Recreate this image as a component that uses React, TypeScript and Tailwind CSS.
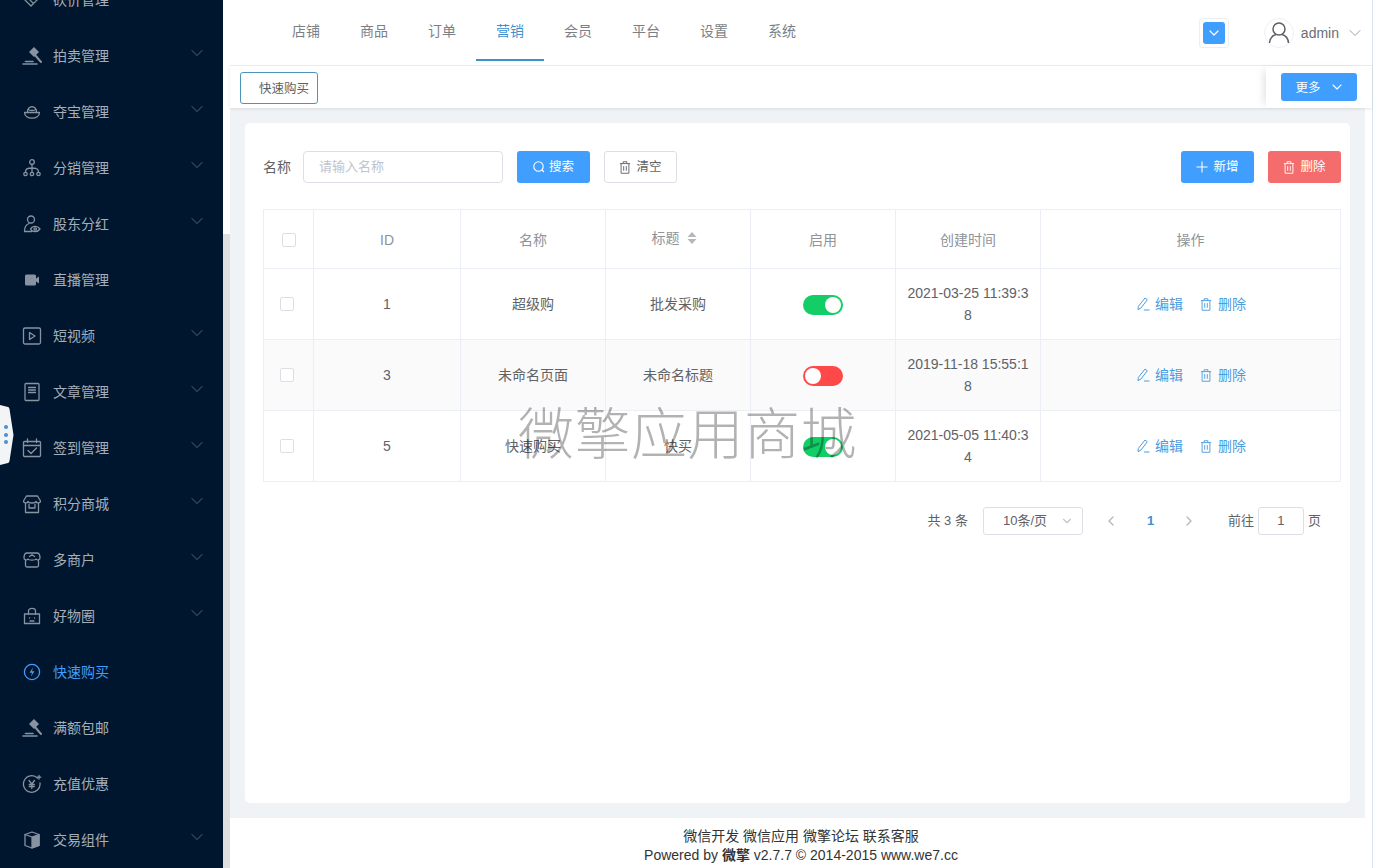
import { ChevronDown, ChevronLeft, ChevronRight } from "lucide-react";
import type { ReactNode } from "react";

type MenuItem = { label: string; icon: ReactNode; arrow?: boolean; active?: boolean };

function Ico({ children, size = 20 }: { children: ReactNode; size?: number }) {
  return (
    <svg width={size} height={size} viewBox="0 0 20 20" fill="none" stroke="currentColor" strokeWidth="1.3" strokeLinecap="round" strokeLinejoin="round">
      {children}
    </svg>
  );
}

const gavel = (
  <Ico>
    <path d="M12 1 L17 6 L12 11 L7 6 Z" fill="currentColor" stroke="none" />
    <path d="M13 9 L19 16" strokeWidth="2" />
    <path d="M1 18 H15" strokeWidth="1.6" />
    <path d="M3.5 15.5 H11" strokeWidth="1.6" />
  </Ico>
);

const menu: MenuItem[] = [
  { label: "砍价管理", arrow: true, icon: <Ico><path d="M3 10 L10 3 H16 V9 L9 16 Z" /><path d="M7 9 L11 13" /></Ico> },
  { label: "拍卖管理", arrow: true, icon: gavel },
  {
    label: "夺宝管理",
    arrow: true,
    icon: (
      <Ico>
        <path d="M2.5 10.5 C2.5 18 17.5 18 17.5 10.5 Z" />
        <path d="M5.5 10 C5.5 3 14.5 3 14.5 10" />
        <path d="M6 7.5 C8 8.8 12 8.8 14 7.5" />
      </Ico>
    ),
  },
  {
    label: "分销管理",
    arrow: true,
    icon: (
      <Ico>
        <circle cx="10" cy="4" r="2.3" />
        <path d="M10 6.5 V14 M10 10 C5 10 3.5 11 3.5 14 M10 10 C15 10 16.5 11 16.5 14" />
        <circle cx="3.5" cy="16" r="1.7" />
        <circle cx="10" cy="16" r="1.7" />
        <circle cx="16.5" cy="16" r="1.7" />
      </Ico>
    ),
  },
  {
    label: "股东分红",
    arrow: true,
    icon: (
      <Ico>
        <circle cx="9" cy="5.5" r="3.5" />
        <path d="M7 9.5 C4 10.5 2.5 14 2.5 17.5 H10" />
        <path d="M8.5 15 C10.5 11.5 15.5 11.5 18 15 C15.5 18.5 10.5 18.5 8.5 15 Z" />
        <circle cx="13.2" cy="15" r="1.2" />
      </Ico>
    ),
  },
  {
    label: "直播管理",
    icon: (
      <Ico>
        <rect x="3" y="4.5" width="11" height="11" rx="1.5" fill="currentColor" stroke="none" />
        <path d="M14 8.5 L17 6.5 V13.5 L14 11.5 Z" fill="currentColor" stroke="none" />
      </Ico>
    ),
  },
  {
    label: "短视频",
    arrow: true,
    icon: (
      <Ico>
        <rect x="1.5" y="2" width="17" height="16" rx="1.5" />
        <path d="M7.5 6.5 L13 10 L7.5 13.5 Z" />
      </Ico>
    ),
  },
  {
    label: "文章管理",
    arrow: true,
    icon: (
      <Ico>
        <rect x="3" y="1.5" width="14" height="17" rx="1" />
        <path d="M6.5 5.5 H13.5 M6.5 8 H13.5 M6.5 10.5 H13.5" />
      </Ico>
    ),
  },
  {
    label: "签到管理",
    arrow: true,
    icon: (
      <Ico>
        <rect x="1.5" y="3.5" width="17" height="15" rx="1" />
        <path d="M1.5 7.5 H18.5 M5.5 1 V4.5 M14.5 1 V4.5" />
        <path d="M6 12.5 L9 15.5 L14.5 10" />
      </Ico>
    ),
  },
  {
    label: "积分商城",
    arrow: true,
    icon: (
      <Ico>
        <path d="M4.5 2 H15.5 L18.5 7 C18.5 9.5 14.5 9.5 14 7.5 C13.5 9.5 6.5 9.5 6 7.5 C5.5 9.5 1.5 9.5 1.5 7 Z" />
        <path d="M3.5 9.5 V18.5 H16.5 V9.5" />
        <path d="M7 10.5 V14 H13 V10.5" />
      </Ico>
    ),
  },
  {
    label: "多商户",
    arrow: true,
    icon: (
      <Ico>
        <path d="M5 3 H15 C17 3 18 5 18 8 C18 10 15 10.5 14 9 C13 10.5 7 10.5 6 9 C5 10.5 2 10 2 8 C2 5 3 3 5 3 Z" />
        <path d="M3.5 10.5 V15.5 C3.5 16.5 4 17 5 17 H15 C16 17 16.5 16.5 16.5 15.5 V10.5" />
        <path d="M7.5 6.5 L10 4.8 L12.5 6.5" />
      </Ico>
    ),
  },
  {
    label: "好物圈",
    arrow: true,
    icon: (
      <Ico>
        <path d="M2.5 8 H17.5 V17.5 H2.5 Z" />
        <path d="M6.5 8 V5 C6.5 1.5 13.5 1.5 13.5 5 V8" />
        <path d="M7.5 12 H7.6 M12.5 12 H12.6 M8 15 H12" />
      </Ico>
    ),
  },
  {
    label: "快速购买",
    active: true,
    icon: (
      <Ico>
        <circle cx="10" cy="10" r="7.6" />
        <path d="M11 5.5 L7.5 10.8 H10 L9 14.5 L12.5 9.2 H10 Z" fill="currentColor" stroke="none" />
      </Ico>
    ),
  },
  { label: "满额包邮", icon: gavel },
  {
    label: "充值优惠",
    icon: (
      <Ico>
        <path d="M15.5 4 A8.3 8.3 0 1 0 18 9" />
        <path d="M7 6.5 L9.8 10 L12.5 6.5 M9.8 10 V14.5 M7.2 10.5 H12.3 M7.2 12.5 H12.3" />
        <path d="M17 1.5 V5 M15.2 3.2 H18.8" />
      </Ico>
    ),
  },
  {
    label: "交易组件",
    arrow: true,
    icon: (
      <Ico>
        <path d="M3 4.5 L10 2 L17 4.5 V15.5 L10 18 L3 15.5 Z" />
        <path d="M10 7 V18 L17 15.5 V4.5 Z" fill="currentColor" />
        <path d="M3 4.5 L10 7" />
      </Ico>
    ),
  },
];

const navs = ["店铺", "商品", "订单", "营销", "会员", "平台", "设置", "系统"];

const rows = [
  { id: 1, name: "超级购", title: "批发采购", on: true, time: "2021-03-25 11:39:38" },
  { id: 3, name: "未命名页面", title: "未命名标题", on: false, time: "2019-11-18 15:55:18" },
  { id: 5, name: "快速购买", title: "快买", on: true, time: "2021-05-05 11:40:34" },
];

function Trash({ className }: { className?: string }) {
  return (
    <svg className={className} width="12" height="13" viewBox="0 0 12 14" fill="none" stroke="currentColor" strokeWidth="1">
      <path d="M0.5 2.8 H11.5 M4 2.8 V0.8 H8 V2.8 M1.8 2.8 V13.2 H10.2 V2.8 M4.6 5.5 V10.5 M7.4 5.5 V10.5" />
    </svg>
  );
}

function Pencil() {
  return (
    <svg width="13" height="14" viewBox="0 0 13 14" fill="none" stroke="currentColor" strokeWidth="1">
      <path d="M8 1 L10.3 2.8 L3.8 11.2 L1 12.6 L1.3 9.5 Z M7 13 H12.5" />
    </svg>
  );
}

function Toggle({ on }: { on: boolean }) {
  return (
    <div className={`mx-auto flex h-5 w-10 translate-y-px items-center rounded-full px-[2px] ${on ? "justify-end bg-[#13ce66]" : "justify-start bg-[#ff4949]"}`}>
      <div className="h-4 w-4 rounded-full bg-white" />
    </div>
  );
}

function Checkbox({ className }: { className?: string }) {
  return <div className={`h-[14px] w-[14px] rounded-[2px] border border-[#dcdfe6] bg-white ${className ?? ""}`} />;
}

export default function App() {
  return (
    <div className="relative flex h-[868px] w-[1373px] overflow-hidden bg-white font-['Liberation_Sans','Noto_Sans_CJK_SC',sans-serif] text-sm text-[#606266]">
      <aside className="w-[223px] shrink-0 overflow-hidden bg-[#00162e]">
        <div className="-mt-[28px]">
          {menu.map((m) => (
            <div key={m.label} className={`flex h-14 items-center pl-[22px] pr-[16px] ${m.active ? "text-[#409eff]" : "text-[#a5afb9]"}`}>
              <span className={`flex w-[31px] shrink-0 ${m.active ? "text-[#409eff]" : "text-[#8793a1]"}`}>{m.icon}</span>
              <span className="flex-1 leading-none">{m.label}</span>
              {m.arrow && <ChevronDown className="-mt-[6px] text-[#66717e]" size={20} strokeWidth={1} />}
            </div>
          ))}
        </div>
      </aside>

      {/* sidebar scrollbar */}
      <div className="flex w-[7px] shrink-0 flex-col bg-white">
        <div className="h-[234px]" />
        <div className="flex-1 bg-[#e0e0e0]" />
      </div>

      <main className="flex min-w-0 flex-1 flex-col border-r border-[#d5e3f0]">
        <header className="flex h-[66px] shrink-0 items-center border-b border-[#eeeeee] pl-[28px] pr-[7px]">
          <nav className="flex h-full flex-1 pl-[14px]">
            {navs.map((n) => (
              <div
                key={n}
                className={`flex h-[61px] w-[68px] items-center justify-center border-b-2 pt-[3px] ${n === "营销" ? "border-[#3f91c9] text-[#3f91d0]" : "border-transparent text-[#7b7f86]"}`}
              >
                {n}
              </div>
            ))}
          </nav>
          <div className="flex h-[30px] w-[30px] items-center justify-center rounded-[3px] border border-[#eeeeee]">
            <div className="flex h-[22px] w-[22px] items-center justify-center rounded-[3px] bg-[#409eff] text-white">
              <ChevronDown size={16} strokeWidth={1.8} />
            </div>
          </div>
          <div className="ml-[35px] flex h-[30px] w-[30px] items-center justify-center rounded-full border border-[#f0f0f0] text-[#5c5f66]">
            <svg width="22" height="24" viewBox="0 0 22 24" fill="none" stroke="currentColor" strokeWidth="1.5">
              <circle cx="11" cy="8" r="6" />
              <path d="M1.5 22 C2 16 6 14 8 13.5 M20.5 22 C20 16 16 14 14 13.5" />
            </svg>
          </div>
          <span className="ml-[7px] text-[#6b6e74]">admin</span>
          <ChevronDown className="ml-[6px] text-[#8a8d92]" size={20} strokeWidth={1} />
        </header>

        <div className="relative z-10 flex h-[42px] shrink-0 items-start justify-between pl-[10px] pr-[7px] pt-[6px] shadow-[0_1px_3px_rgba(0,0,0,0.1)]">
          <div className="flex h-8 w-[78px] items-center rounded-[3px] border border-[#4d94ba] pl-[18px] pt-[3px] text-[12.5px] text-[#5c5f66]">快速购买</div>
          <div className="-mt-[6px] flex h-[42px] w-[99px] items-start justify-end bg-white pr-[8px] pt-[7px] shadow-[-6px_0_8px_-4px_rgba(0,0,0,0.12)]">
            <div className="flex h-7 w-[76px] items-center justify-center gap-[8px] rounded-[3px] bg-[#409eff] pl-[2px] text-[12.5px] text-white">
              <span className="mt-[3px]">更多</span>
              <ChevronDown size={16} strokeWidth={1.6} />
            </div>
          </div>
        </div>

        <div className="flex min-h-0 flex-1">
          <div className="w-[1135px] shrink-0 bg-[#f0f3f5] p-[15px]">
            <section className="h-full rounded-[5px] bg-white pl-[18px] pr-[9px] pt-[28px]">
              <div className="flex h-8 items-center">
                <span className="w-10">名称</span>
                <div className="flex h-8 w-[200px] items-center rounded-[4px] border border-[#dcdfe6] pl-[15px] text-[13px] text-[#c0c4cc]">请输入名称</div>
                <button className="ml-[14px] flex h-8 w-[73px] items-center justify-center gap-[4px] rounded-[3px] bg-[#409eff] text-[12.5px] text-white">
                  <svg width="12" height="12" viewBox="0 0 12 12" fill="none" stroke="currentColor" strokeWidth="1.1">
                    <circle cx="5.5" cy="5.5" r="4.7" />
                    <path d="M9 9 L11 11" />
                  </svg>
                  <span className="mt-[2px]">搜索</span>
                </button>
                <button className="ml-[14px] flex h-8 w-[73px] items-center justify-center gap-[5px] rounded-[3px] border border-[#dcdfe6] text-[12.5px]">
                  <Trash />
                  <span className="mt-[2px]">清空</span>
                </button>
                <button className="ml-auto flex h-8 w-[73px] items-center justify-center gap-[5px] rounded-[3px] bg-[#409eff] text-[12.5px] text-white">
                  <svg width="12" height="12" viewBox="0 0 12 12" stroke="currentColor" strokeWidth="1.1">
                    <path d="M6 0.5 V11.5 M0.5 6 H11.5" />
                  </svg>
                  <span className="mt-[2px]">新增</span>
                </button>
                <button className="ml-[14px] flex h-8 w-[73px] items-center justify-center gap-[5px] rounded-[3px] bg-[#f56c6c] text-[12.5px] text-white">
                  <Trash />
                  <span className="mt-[2px]">删除</span>
                </button>
              </div>

              <table className="mt-[26px] w-[1077px] table-fixed border-collapse text-center">
                <colgroup>
                  <col className="w-[50px]" />
                  <col className="w-[147px]" />
                  <col className="w-[145px]" />
                  <col className="w-[145px]" />
                  <col className="w-[145px]" />
                  <col className="w-[145px]" />
                  <col className="w-[300px]" />
                </colgroup>
                <thead>
                  <tr className="h-[59px] text-[#909399]">
                    <th className="border border-[#ebeef5] pt-[2px] font-normal">
                      <Checkbox className="mx-auto" />
                    </th>
                    <th className="border border-[#ebeef5] pt-[2px] font-normal">ID</th>
                    <th className="border border-[#ebeef5] pt-[2px] font-normal">名称</th>
                    <th className="border border-[#ebeef5] font-normal">
                      <div className="-mt-[2px] flex items-center justify-center gap-[7px] pr-[8px]">
                        标题
                        <svg width="10" height="14" viewBox="0 0 10 14" fill="#b4b7bd">
                          <path d="M5 1 L9.5 6 H0.5 Z M5 13 L9.5 8 H0.5 Z" />
                        </svg>
                      </div>
                    </th>
                    <th className="border border-[#ebeef5] pt-[2px] font-normal">启用</th>
                    <th className="border border-[#ebeef5] pt-[2px] font-normal">创建时间</th>
                    <th className="border border-[#ebeef5] pt-[2px] font-normal">操作</th>
                  </tr>
                </thead>
                <tbody>
                  {rows.map((r) => (
                    <tr key={r.id} className={`h-[71px] ${r.id === 3 ? "bg-[#fafafa]" : ""}`}>
                      <td className="border border-[#ebeef5]">
                        <Checkbox className="mx-auto -translate-x-[2px]" />
                      </td>
                      <td className="border border-[#ebeef5]">{r.id}</td>
                      <td className="border border-[#ebeef5]">{r.name}</td>
                      <td className="border border-[#ebeef5]">{r.title}</td>
                      <td className="border border-[#ebeef5]">
                        <Toggle on={r.on} />
                      </td>
                      <td className="border border-[#ebeef5] px-[11px] leading-[22px] break-all">{r.time}</td>
                      <td className="border border-[#ebeef5]">
                        <div className="flex translate-x-px items-center justify-center text-[#4b9ce0]">
                          <Pencil />
                          <span className="ml-[5px]">编辑</span>
                          <Trash className="ml-[17px]" />
                          <span className="ml-[6px]">删除</span>
                        </div>
                      </td>
                    </tr>
                  ))}
                </tbody>
              </table>

              <div className="mt-[25px] flex h-7 items-center justify-end pr-[20px] text-[13px]">
                <span>共 3 条</span>
                <div className="ml-[15px] flex h-7 w-[100px] items-center rounded-[3px] border border-[#dcdfe6] pl-[19px] pr-[8px]">
                  <span className="flex-1">10条/页</span>
                  <ChevronDown className="text-[#c0c4cc]" size={14} />
                </div>
                <ChevronLeft className="ml-[20px] text-[#b5b8be]" size={16} />
                <span className="ml-[28px] w-[8px] font-bold text-[#3f91c9]">1</span>
                <ChevronRight className="ml-[26px] text-[#b5b8be]" size={16} />
                <span className="ml-[31px]">前往</span>
                <div className="ml-[4px] flex h-7 w-[46px] items-center justify-center rounded-[3px] border border-[#dcdfe6]">1</div>
                <span className="ml-[4px]">页</span>
              </div>
            </section>
          </div>
        </div>

        <footer className="flex h-[50px] shrink-0 flex-col items-center pt-[9px] leading-[19px] text-[#333333]">
          <div>微信开发 微信应用 微擎论坛 联系客服</div>
          <div>
            Powered by <b className="font-bold">微擎</b> v2.7.7 © 2014-2015 www.we7.cc
          </div>
        </footer>
      </main>

      {/* drawer handle on the sidebar edge */}
      <svg className="absolute left-0 top-[405px]" width="14" height="61" viewBox="0 0 14 61">
        <path d="M0 0 L8 2 Q9 2 9.5 4 L13.5 30 L9.5 56 Q9 58 8 58 L0 60 Z" fill="#f2f4f6" />
        <circle cx="6" cy="22" r="2" fill="#4a90d0" />
        <circle cx="6" cy="30" r="2" fill="#4a90d0" />
        <circle cx="6" cy="37" r="2" fill="#4a90d0" />
      </svg>

      {/* watermark */}
      <div className="pointer-events-none absolute left-[518px] top-[395px] text-[56px] font-light leading-[80px] tracking-[0.5px] whitespace-nowrap text-black/30">微擎应用商城</div>
    </div>
  );
}
